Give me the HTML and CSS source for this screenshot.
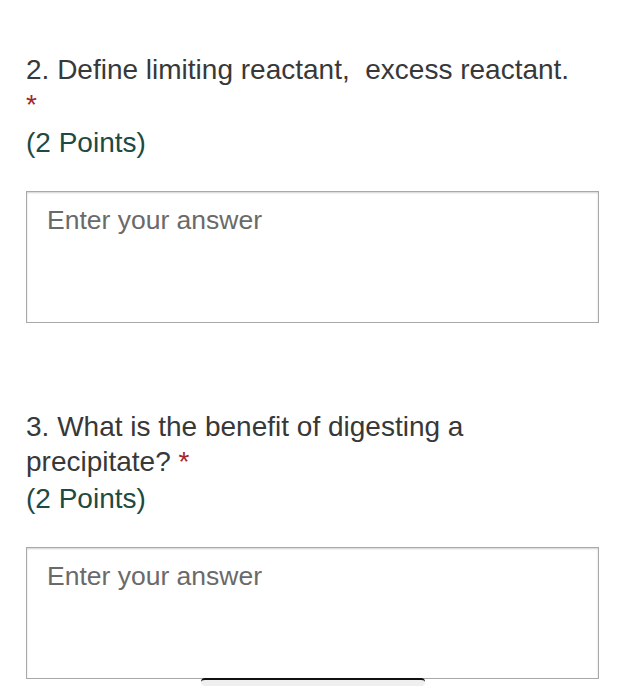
FILE: index.html
```html
<!DOCTYPE html>
<html lang="en">
<head>
<meta charset="utf-8">
<title>Form questions</title>
<link rel="stylesheet" href="styles.css">
</head>
<body>
<main class="form">
  <section class="question q2">
    <div class="title">2. Define limiting reactant,&nbsp; excess reactant. <span class="req">*</span></div>
    <div class="points">(2 Points)</div>
    <div class="answer"><span class="placeholder">Enter your answer</span></div>
  </section>
  <section class="question q3">
    <div class="title">3. What is the benefit of digesting a precipitate? <span class="req">*</span></div>
    <div class="points">(2 Points)</div>
    <div class="answer"><span class="placeholder">Enter your answer</span></div>
  </section>
</main>
<div class="home-indicator"></div>
</body>
</html>
```

FILE: styles.css
```css
html, body {
  margin: 0;
  padding: 0;
  background: #ffffff;
}

body {
  font-family: "Liberation Sans", Arial, sans-serif;
  width: 626px;
  height: 700px;
  overflow: hidden;
  position: relative;
}

.form {
  padding: 52px 27px 0 26px;
  display: flex;
  flex-direction: column;
}

.question {
  display: flex;
  flex-direction: column;
}

.question + .question {
  margin-top: 86px;
}

.title {
  font-size: 28px;
  line-height: 35px;
  color: #383838;
  max-width: 560px;
}

.req {
  color: #a4262c;
}

.points {
  font-size: 28px;
  line-height: 35px;
  color: #1d4a44;
  margin-top: 3px;
}

.answer {
  margin-top: 31px;
  height: 132px;
  border: 1px solid #a9a9a9;
  box-shadow: inset 0 1px 2px rgba(0, 0, 0, 0.18);
  padding: 12px 20px;
  box-sizing: border-box;
}

.q3 .points {
  margin-top: 2px;
}

.placeholder {
  font-size: 26.5px;
  line-height: 32px;
  color: #6a6a6a;
}

.home-indicator {
  position: absolute;
  left: 201px;
  top: 678px;
  width: 224px;
  height: 8px;
  box-sizing: border-box;
  background: #efefef;
  border-top: 2px solid #111;
  border-radius: 4px;
}
```
